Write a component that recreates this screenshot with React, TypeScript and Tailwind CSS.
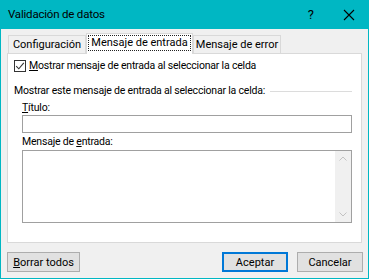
import React from 'react';

const font = { fontFamily: 'Roboto, "Liberation Sans", Arial, sans-serif' };

const Tab: React.FC<{ label: string; active?: boolean; width: string }> = ({ label, active, width }) => {
  if (active) {
    return (
      <div
        className={`${width} h-[21px] -mb-px bg-white border border-b-0 border-[#d9d9d9] flex items-start justify-center pt-[1px] relative z-10 whitespace-nowrap`}
      >
        <span className="border border-dotted border-[#222] px-[2px] h-[16px] leading-[14px]">{label}</span>
      </div>
    );
  }
  return (
    <div
      className={`${width} h-[18px] bg-[#f0f0f0] border border-b-0 border-[#d9d9d9] flex items-center justify-center leading-none whitespace-nowrap`}
    >
      {label}
    </div>
  );
};

const Button: React.FC<{ children: React.ReactNode; primary?: boolean; width: string }> = ({
  children,
  primary,
  width,
}) => (
  <button
    className={`${width} h-[20px] bg-[#e1e1e1] text-[11px] leading-none text-black flex items-center justify-center ${
      primary ? 'border-2 border-[#0078d7]' : 'border border-[#adadad]'
    }`}
  >
    {children}
  </button>
);

export default function App() {
  return (
    <div
      className="w-[369px] h-[279px] border border-[#00b7c3] bg-[#f0f0f0] flex flex-col text-[11px] text-black"
      style={font}
    >
      {/* Title bar */}
      <div className="h-[28px] bg-[#00b7c3] flex items-center pl-[7px] pr-[11px]">
        <span className="text-[11.5px] tracking-[-0.2px]">Validación de datos</span>
        <span className="ml-auto text-[13px] mr-[29px]">?</span>
        <svg width="12" height="12" viewBox="0 0 12 12" className="mr-[2px]">
          <path d="M1 1L11 11M11 1L1 11" stroke="#000" strokeWidth="1.1" />
        </svg>
      </div>

      <div className="flex flex-col pl-[6px] pt-[3px]">
        {/* Tabs */}
        <div className="flex items-end h-[21px] pl-[1px]">
          <Tab label="Configuración" width="w-[78px]" />
          <Tab label="Mensaje de entrada" width="w-[107px]" active />
          <Tab label="Mensaje de error" width="w-[88px]" />
        </div>

        {/* Panel */}
        <div className="w-[355px] h-[190px] bg-white border border-[#d9d9d9] flex flex-col pl-[6px] pr-[5px] text-[10.5px] tracking-[-0.2px]">
          <div className="flex items-center mt-[5px] h-[14px]">
            <div className="w-[12px] h-[12px] border border-[#333] flex items-center justify-center">
              <svg width="10" height="10" viewBox="0 0 10 10">
                <path d="M1.2 5.2L3.8 7.8L8.8 1.8" fill="none" stroke="#333" strokeWidth="1.1" />
              </svg>
            </div>
            <span className="ml-[3px] whitespace-nowrap">
              <span className="underline underline-offset-1">M</span>ostrar mensaje de entrada al seleccionar la celda
            </span>
          </div>

          <div className="flex items-center mt-[11px] h-[14px]">
            <span className="whitespace-nowrap">Mostrar este mensaje de entrada al seleccionar la celda:</span>
            <div className="flex-1 h-px bg-[#dcdcdc] ml-[5px] mr-[4px]" />
          </div>

          <div className="pl-[8px] pr-[4px] flex flex-col">
            <div className="mt-[3px] h-[14px] leading-[14px]">
              <span className="underline underline-offset-1">T</span>ítulo:
            </div>
            <div className="mt-[0px] h-[18px] border border-[#a0a0a0] bg-white" />

            <div className="mt-[2px] h-[14px] leading-[14px]">
              Mensaje de <span className="underline underline-offset-1">e</span>ntrada:
            </div>
            <div className="mt-[1px] h-[73px] border border-[#a0a0a0] bg-white flex justify-end">
              <div className="w-[16px] h-full bg-[#f0f0f0] flex flex-col items-center justify-between py-[5px]">
                <svg width="8" height="5" viewBox="0 0 8 5">
                  <path d="M0.5 4.5L4 1L7.5 4.5" fill="none" stroke="#c2c2c2" strokeWidth="1" />
                </svg>
                <svg width="8" height="5" viewBox="0 0 8 5">
                  <path d="M0.5 0.5L4 4L7.5 0.5" fill="none" stroke="#c2c2c2" strokeWidth="1" />
                </svg>
              </div>
            </div>
          </div>
        </div>

        {/* Buttons */}
        <div className="flex items-center mt-[9px] pr-[5px] w-[361px]">
          <Button width="w-[73px]">
            <span className="underline underline-offset-1">B</span>orrar todos
          </Button>
          <div className="ml-auto flex gap-[9px]">
            <Button width="w-[66px]" primary>
              Aceptar
            </Button>
            <Button width="w-[66px]">Cancelar</Button>
          </div>
        </div>
      </div>
    </div>
  );
}
